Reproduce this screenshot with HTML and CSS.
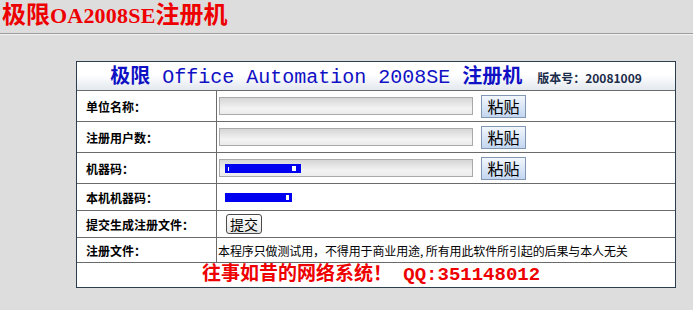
FILE: index.html
```html
<!DOCTYPE html>
<html lang="zh-CN">
<head>
<meta charset="utf-8">
<title>极限OA2008SE注册机</title>
<link rel="stylesheet" href="styles.css">
</head>
<body>
<h1 class="title">极限<span class="title-lat">OA2008SE</span>注册机</h1>
<hr class="rule">
<div class="panel">
  <div class="head">
    <span class="head-title"><b class="head-cjk">极限</b> Office Automation 2008SE <b class="head-cjk">注册机</b></span>
    <span class="ver">版本号：20081009</span>
  </div>
  <div class="row row-a">
    <div class="label">单位名称：</div>
    <div class="cell"><input class="field" type="text"><button class="paste" type="button">粘贴</button></div>
  </div>
  <div class="row row-a">
    <div class="label">注册用户数：</div>
    <div class="cell"><input class="field" type="text"><button class="paste" type="button">粘贴</button></div>
  </div>
  <div class="row row-b">
    <div class="label">机器码：</div>
    <div class="cell"><div class="field field-sel"><span class="sel sel-long"><i class="dot dot-l"></i><i class="dot dot-r"></i></span></div><button class="paste" type="button">粘贴</button></div>
  </div>
  <div class="row row-c">
    <div class="label">本机机器码：</div>
    <div class="cell cell-pad"><span class="sel sel-short"><i class="dot dot-r2"></i></span></div>
  </div>
  <div class="row row-c">
    <div class="label">提交生成注册文件：</div>
    <div class="cell cell-pad2"><button class="submit" type="button">提交</button></div>
  </div>
  <div class="row row-d">
    <div class="label">注册文件：</div>
    <div class="cell cell-text">本程序只做测试用，不得用于商业用途, 所有用此软件所引起的后果与本人无关</div>
  </div>
  <div class="foot">往事如昔的网络系统！ QQ:351148012</div>
</div>
</body>
</html>
```
FILE: styles.css
```css
html, body {
  margin: 0;
  padding: 0;
  background: #dddddd;
}
body {
  font-family: "Noto Sans CJK SC", sans-serif;
  color: #000;
}
.title {
  margin: 0;
  padding-left: 2px;
  height: 30px;
  line-height: 30px;
  font-size: 24px;
  font-weight: bold;
  color: #ee0000;
  font-family: "Liberation Serif", "Noto Sans CJK SC", serif;
}
.title-lat {
  font-size: 22px;
  letter-spacing: 0.2px;
}
.rule {
  margin: 3px 0 0 0;
  height: 0;
  border: 0;
  border-top: 1px solid #9c9c9c;
  border-bottom: 1px solid #f2f2f2;
}
.panel {
  margin: 26px 0 0 76px;
  width: 598px;
  border: 1px solid #2c3d4e;
  background: #ffffff;
}
.head {
  box-sizing: border-box;
  height: 28px;
  padding-top: 3px;
  display: flex;
  align-items: baseline;
  justify-content: center;
  line-height: 25px;
  background: linear-gradient(#ffffff 45%, #e3e8ee);
}
.head-title {
  font-family: "Liberation Mono", "Noto Sans CJK SC", monospace;
  font-size: 20px;
  color: #1010c4;
}
.head-cjk {
  font-weight: bold;
}
.ver {
  margin-left: 15px;
  font-size: 12px;
  font-weight: bold;
  color: #1c2d4b;
}
.row {
  display: grid;
  grid-template-columns: 140px 1fr;
  border-top: 1px solid #6b6b6b;
}
.row-a { height: 30px; }
.row-b { height: 30px; }
.row-c { height: 26px; }
.row-d { height: 24px; }
.label {
  display: flex;
  align-items: center;
  padding-left: 9px;
  border-right: 1px solid #6b6b6b;
  font-size: 12px;
  font-weight: bold;
}
.cell {
  display: flex;
  align-items: center;
  padding-left: 2px;
  gap: 8px;
}
.cell-pad { padding-left: 8px; }
.cell-pad2 { padding-left: 9px; }
.cell-text {
  padding-left: 1px;
  font-size: 12px;
  letter-spacing: -0.12px;
}
.field {
  box-sizing: border-box;
  width: 254px;
  height: 18px;
  margin: 0;
  padding: 0;
  border: 1px solid #a9a9a9;
  background: linear-gradient(#d6d6d6, #f3f3f3 65%, #ebebeb);
}
.field-sel {
  display: flex;
  align-items: center;
  padding-left: 5px;
}
.sel {
  position: relative;
  display: block;
  background: #0000f0;
}
.sel-long { width: 76px; height: 9px; }
.sel-short { width: 67px; height: 9px; }
.dot {
  position: absolute;
  background: #ffffff;
}
.dot-l { left: 3px; top: 3px; width: 1px; height: 4px; }
.dot-r { right: 5px; top: 2px; width: 4px; height: 5px; }
.dot-r2 { right: 3px; top: 2px; width: 3px; height: 5px; }
.paste {
  box-sizing: border-box;
  width: 45px;
  height: 23px;
  margin: 0;
  padding: 0;
  border: 1px solid #8297b4;
  background: linear-gradient(#f2f7fd, #c3d6f0);
  font-family: "Noto Sans CJK SC", sans-serif;
  font-size: 16px;
  line-height: 20px;
  color: #000;
}
.submit {
  box-sizing: border-box;
  width: 36px;
  height: 20px;
  margin: 0;
  padding: 0;
  border: 1px solid #4a4a4a;
  border-radius: 3px;
  background: linear-gradient(#ffffff, #e6e6e6);
  font-family: "Noto Sans CJK SC", sans-serif;
  font-size: 14px;
  line-height: 17px;
  color: #000;
}
.foot {
  height: 24px;
  line-height: 24px;
  border-top: 1px solid #6b6b6b;
  text-align: center;
  padding-right: 10px;
  font-family: "Liberation Mono", "Noto Sans CJK SC", monospace;
  font-size: 19px;
  font-weight: bold;
  color: #ee0000;
}
```
